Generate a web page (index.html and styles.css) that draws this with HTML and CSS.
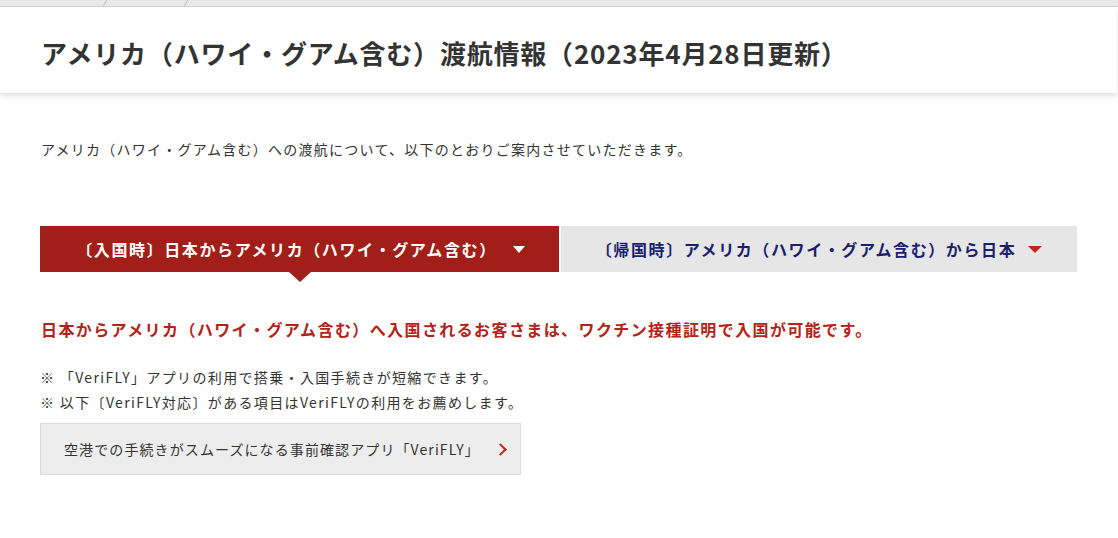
FILE: index.html
```html
<!DOCTYPE html>
<html lang="ja">
<head>
    <meta charset="UTF-8">
    <meta name="viewport" content="width=device-width, initial-scale=1.0">
    <title>アメリカ（ハワイ・グアム含む）渡航情報</title>
    <link rel="stylesheet" href="styles.css">
</head>
<body>
<div class="crumbs">
    <span class="crumb first"></span>
    <span class="crumb second"></span>
</div>

<header class="page_head">
    <h1>アメリカ（ハワイ・グアム含む）渡航情報（2023年4月28日更新）</h1>
</header>

<main class="content">
    <p class="lead">アメリカ（ハワイ・グアム含む）への渡航について、以下のとおりご案内させていただきます。</p>

    <div class="tabs">
        <a href="#" class="tab active">〔入国時〕日本からアメリカ（ハワイ・グアム含む）<span class="tri"></span></a>
        <a href="#" class="tab">〔帰国時〕アメリカ（ハワイ・グアム含む）から日本<span class="tri"></span></a>
    </div>

    <p class="notice">日本からアメリカ（ハワイ・グアム含む）へ入国されるお客さまは、ワクチン接種証明で入国が可能です。</p>

    <div class="notes">
        <div>※ 「VeriFLY」アプリの利用で搭乗・入国手続きが短縮できます。</div>
        <div>※ 以下〔VeriFLY対応〕がある項目はVeriFLYの利用をお薦めします。</div>
    </div>

    <a href="#" class="link_btn">空港での手続きがスムーズになる事前確認アプリ「VeriFLY」<span class="chev"></span></a>
</main>
</body>
</html>
```

FILE: styles.css
```css
body {
    margin: 0;
    font-family: "Noto Sans CJK JP", "Noto Sans", sans-serif;
    color: #333;
    background: #fff;
}

.crumbs {
    height: 6px;
    background: #e9e9e9;
    border-bottom: 1px solid #d4d4d4;
    position: relative;
    overflow: hidden;
}
.crumb {
    position: absolute;
    top: 0;
    width: 1px;
    height: 8px;
    background: #b8b8b8;
    transform: skewX(-30deg);
}
.crumb.first { left: 104px; }
.crumb.second { left: 185px; }

.page_head {
    background: #fff;
    margin-right: 1px;
    height: 86px;
    display: flex;
    align-items: center;
    padding-left: 41px;
    box-shadow: 0 3px 5px rgba(0, 0, 0, 0.12);
    position: relative;
}
.page_head h1 {
    margin: 0;
    font-size: 26px;
    font-weight: bold;
    color: #333;
    letter-spacing: 0.8px;
    padding-top: 4px;
}

.content {
    padding: 0 41px 0 40px;
}

.lead {
    margin: 40px 0 0;
    padding-left: 1px;
    font-size: 14px;
    letter-spacing: 1.25px;
    line-height: 33px;
}

.tabs {
    display: grid;
    grid-template-columns: 519px 1fr;
    gap: 2px;
    margin-top: 60px;
}
.tab {
    height: 46px;
    display: flex;
    align-items: center;
    justify-content: center;
    font-size: 16px;
    font-weight: bold;
    letter-spacing: 1.6px;
    text-decoration: none;
    background: #e6e6e6;
    color: #1b1f6e;
    position: relative;
}
.tab .tri {
    margin-left: 12px;
    width: 0;
    height: 0;
    border-left: 7px solid transparent;
    border-right: 7px solid transparent;
    border-top: 7px solid #c4261d;
}
.tab.active {
    background: #a11f18;
    color: #fff;
    padding-left: 2px;
}
.tab.active .tri {
    margin-left: 16px;
    border-left-width: 6px;
    border-right-width: 6px;
    border-top: 7px solid #fff;
}
.tab.active::after {
    content: "";
    position: absolute;
    left: 50%;
    bottom: -10px;
    margin-left: -11px;
    border-left: 11px solid transparent;
    border-right: 11px solid transparent;
    border-top: 10px solid #a11f18;
}

.notice {
    margin: 44px 0 0;
    padding-left: 1px;
    font-size: 16px;
    font-weight: bold;
    letter-spacing: 1.4px;
    color: #b52219;
    line-height: 26px;
}

.notes {
    margin-top: 23px;
    font-size: 14px;
    letter-spacing: 1.35px;
    line-height: 25px;
}

.link_btn {
    display: flex;
    align-items: center;
    height: 52px;
    margin-top: 8px;
    padding-left: 23px;
    box-sizing: border-box;
    width: 481px;
    background: #ededed;
    border: 1px solid #dcdcdc;
    color: #333;
    font-size: 14px;
    letter-spacing: 1.1px;
    text-decoration: none;
}
.chev {
    width: 7px;
    height: 7px;
    border-top: 2.5px solid #c4261d;
    border-right: 2.5px solid #c4261d;
    transform: rotate(45deg);
    margin-left: 16px;
}
```
